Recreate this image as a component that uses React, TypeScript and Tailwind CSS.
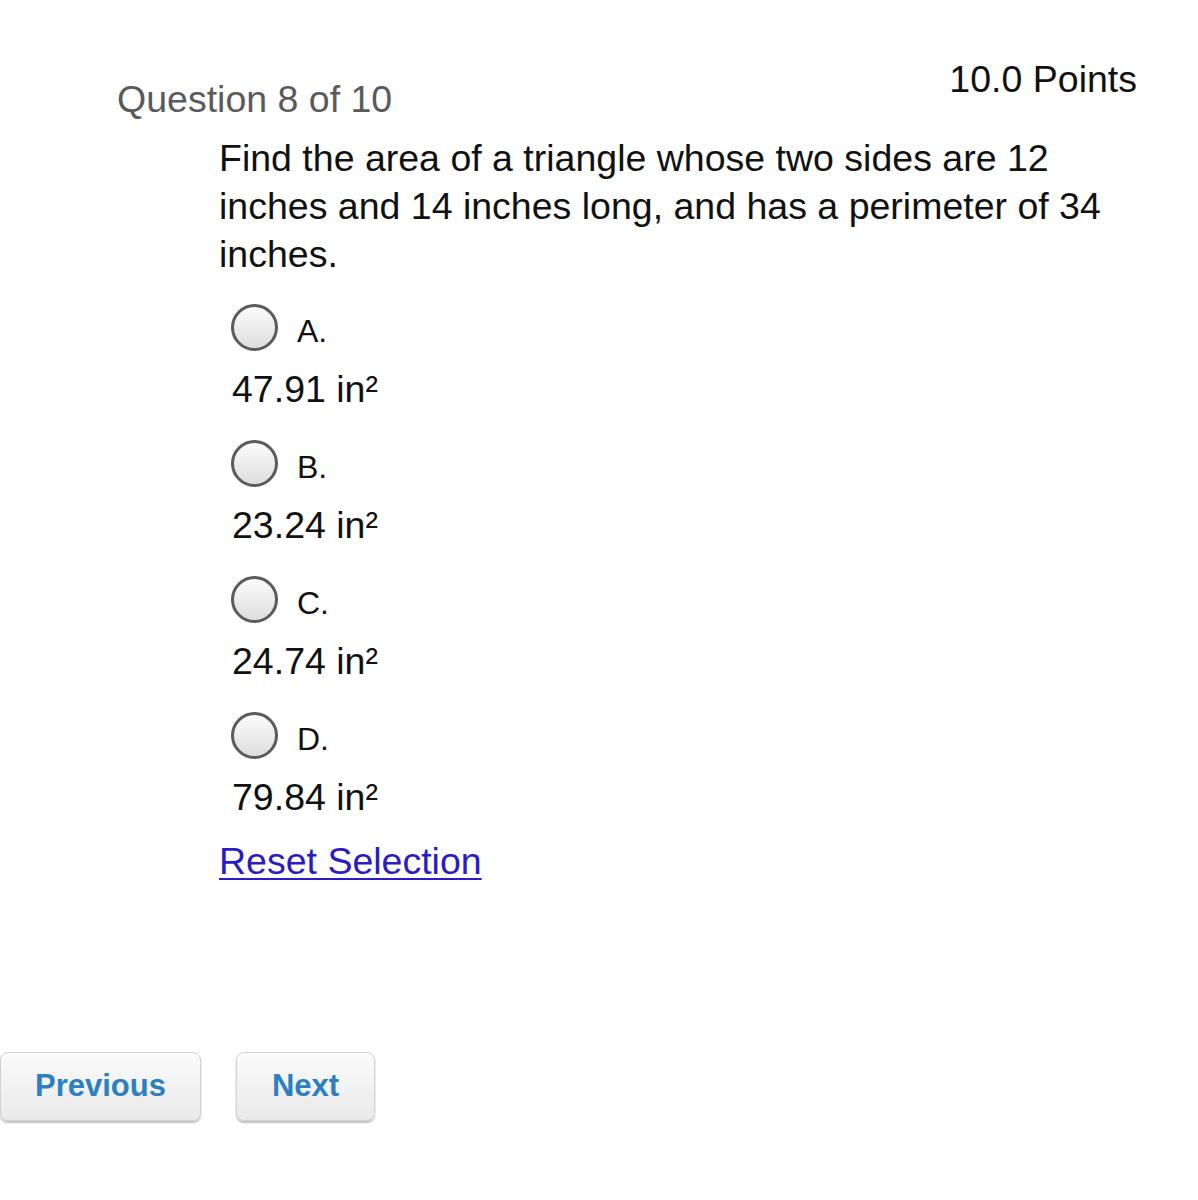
import React from "react";

const options = [
  { letter: "A.", value: "47.91" },
  { letter: "B.", value: "23.24" },
  { letter: "C.", value: "24.74" },
  { letter: "D.", value: "79.84" },
];

function Radio() {
  return (
    <span className="block w-[47px] h-[47px] shrink-0 rounded-full border-[3px] border-[#5b5b5b] bg-gradient-to-b from-[#fbfbfb] to-[#dedede]" />
  );
}

export default function App() {
  return (
    <div className="min-h-[1200px] w-[1198px] bg-white font-['Liberation_Sans',Arial,sans-serif] text-[#111]">
      <div className="flex justify-between items-start pt-[58px] pr-[61px] pl-[117px]">
        <h2 className="mt-[20px] text-[37.5px] leading-[42px] text-[#5a5a5a]">Question 8 of 10</h2>
        <span className="text-[37.5px] leading-[42px] text-[#111]">10.0 Points</span>
      </div>

      <div className="pl-[219px]">
        <p className="mt-[14px] w-[915px] text-[37.5px] leading-[48px]">
          Find the area of a triangle whose two sides are 12 inches and 14 inches long, and has a perimeter of 34 inches.
        </p>

        <div className="mt-[24px] ml-[12px] flex flex-col gap-[28px]">
          {options.map((o) => (
            <div key={o.letter}>
              <label className="flex items-center h-[50px] cursor-pointer">
                <Radio />
                <span className="ml-[19px] mt-[8px] text-[32px] leading-[36px]">{o.letter}</span>
              </label>
              <div className="mt-[16px] ml-[1px] text-[37.5px] leading-[42px]">
                {o.value} in²
              </div>
            </div>
          ))}
        </div>

        <a href="#" className="block mt-[22px] w-fit text-[37.5px] leading-[42px] text-[#2b1bc6] underline underline-offset-[4px] decoration-[2px]">
          Reset Selection
        </a>
      </div>

      <div className="mt-[170px] flex gap-[35px]">
        <button className="w-[201px] h-[69px] rounded-[8px] border border-[#d2d2d2] bg-gradient-to-b from-[#fbfbfb] to-[#e9e9e9] shadow-[0_2px_2px_rgba(0,0,0,0.25)] text-[31px] font-bold text-[#2c80bf]">
          Previous
        </button>
        <button className="w-[139px] h-[69px] rounded-[8px] border border-[#d2d2d2] bg-gradient-to-b from-[#fbfbfb] to-[#e9e9e9] shadow-[0_2px_2px_rgba(0,0,0,0.25)] text-[31px] font-bold text-[#2c80bf]">
          Next
        </button>
      </div>
    </div>
  );
}
